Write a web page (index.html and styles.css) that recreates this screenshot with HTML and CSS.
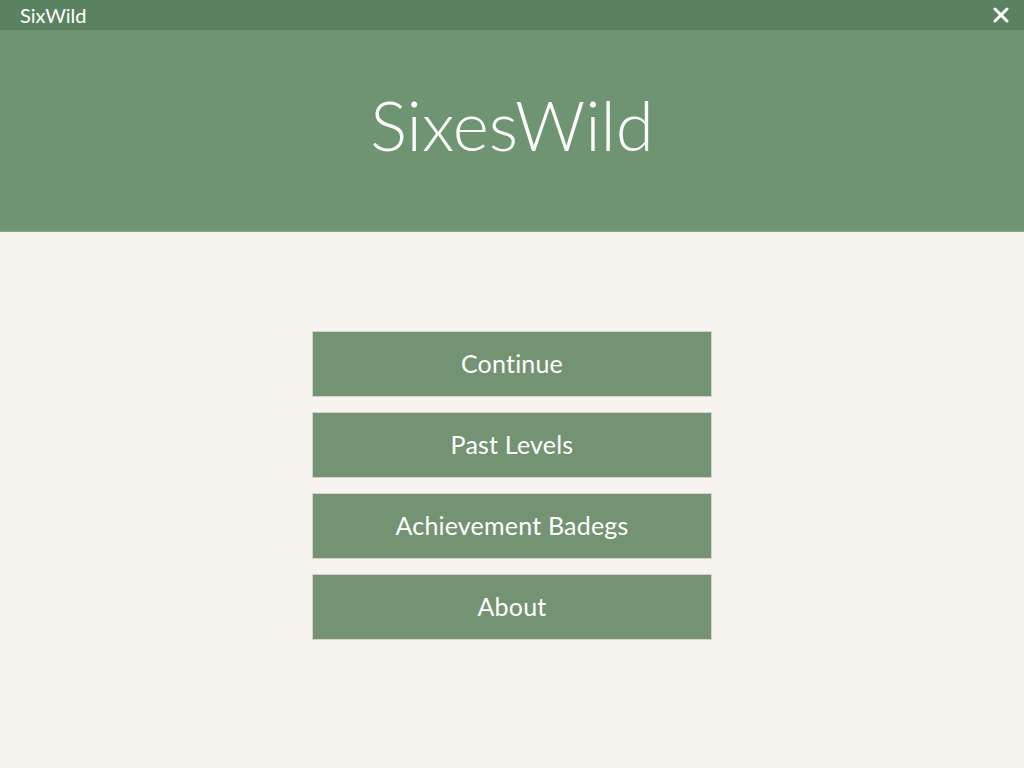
FILE: index.html
```html
<!DOCTYPE html>
<html>
<head>
<meta charset="utf-8">
<link rel="stylesheet" href="styles.css">
</head>
<body>
<div class="titlebar">
  <span class="app-name">SixWild</span>
  <svg class="close" width="16" height="16" viewBox="0 0 16 16"><path d="M2 2 L14 14 M14 2 L2 14" stroke="#fff" stroke-width="3" stroke-linecap="round"/></svg>
</div>
<header class="hero">
  <h1 class="title">SixesWild</h1>
</header>
<main class="menu">
  <button class="menu-btn">Continue</button>
  <button class="menu-btn">Past Levels</button>
  <button class="menu-btn">Achievement Badegs</button>
  <button class="menu-btn">About</button>
</main>
</body>
</html>
```
FILE: styles.css
```css
html, body {
  margin: 0;
  padding: 0;
  height: 100%;
}
body {
  background: #f7f4f0;
  font-family: "Lato", "Open Sans", sans-serif;
  font-variant-ligatures: none;
  display: flex;
  flex-direction: column;
}
.titlebar {
  height: 30px;
  background: #5b8260;
  display: flex;
  align-items: center;
  justify-content: space-between;
  padding: 0 15px 0 20px;
  color: #fff;
}
.app-name {
  font-size: 20px;
}
.close {
  display: block;
}
.hero {
  height: 202px;
  background: #6e9472;
  display: flex;
  justify-content: center;
  align-items: center;
  border-bottom: 1px solid #86a688;
  box-sizing: border-box;
}
.title {
  margin: 0 0 12px 0;
  font-weight: 300;
  font-size: 69px;
  color: #fff;
}
.menu {
  display: flex;
  flex-direction: column;
  align-items: center;
  gap: 15px;
  padding-top: 99px;
}
.menu-btn {
  width: 400px;
  height: 66px;
  background: #739373;
  border: 1px solid #d6d2cb;
  color: #fff;
  font-family: inherit;
  font-variant-ligatures: none;
  font-size: 25px;
  letter-spacing: 0.2px;
  padding: 0 0 2px 0;
  margin: 0;
}
```
